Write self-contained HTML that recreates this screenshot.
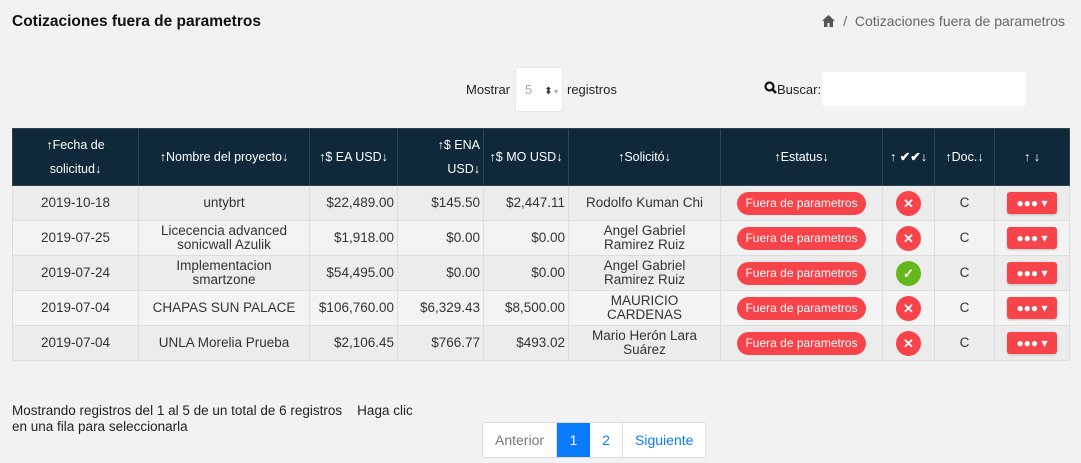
<!DOCTYPE html>
<html><head><meta charset="utf-8"><style>
body{margin:0;background:#f2f2f2;font-family:"Liberation Sans",sans-serif;color:#222;width:1081px;height:463px;overflow:hidden;position:relative}
.a{position:absolute}
h1{position:absolute;left:12px;top:13px;margin:0;font-size:15.5px;font-weight:bold;color:#111}
.bc{right:16px;top:13px;font-size:14px;color:#666}
table{position:absolute;left:12px;top:128px;border-collapse:collapse;table-layout:fixed;width:1057px;font-size:13.5px}
th{background:#10293a;color:#fff;font-weight:normal;height:56px;border:1px solid #2b4352;padding:0 3px;line-height:24px;font-size:12.5px}
td{height:34px;border:1px solid #ddd;text-align:center;color:#333;padding:0 3px;line-height:14px}
td.w{padding:0 14px}
td.n{white-space:nowrap;padding:0 3px}
tr.o td{background:#ececec}tr.e td{background:#f3f3f3}
.r{text-align:right}
.pill{display:inline-block;background:#f7444a;color:#fff;border-radius:12px;padding:0 8px;height:23px;line-height:23px;font-size:12px}
.ci{display:inline-block;width:25px;height:25px;border-radius:50%;background:#f7444a;color:#fff;line-height:25px;font-weight:bold;font-size:13px}
.g{background:#64b81c}
.btn{display:inline-block;background:#f7444a;color:#fff;border-radius:3px;width:50px;height:22px;line-height:22px;font-size:12px;box-shadow:0 1px 2px rgba(0,0,0,.2)}
</style></head><body>
<h1>Cotizaciones fuera de parametros</h1>
<div class="a bc"><svg width="13" height="12" viewBox="0 0 13 12" style="vertical-align:-1px"><path d="M6.5 0L0 6h2v6h3.5V8h2v4H11V6h2z" fill="#555"/></svg> &nbsp;/ &nbsp;Cotizaciones fuera de parametros</div>
<div class="a" style="left:466px;top:82px;font-size:13px">Mostrar</div>
<div class="a" style="left:515px;top:67px;width:46px;height:43px;background:#fff;border:1px solid #e8e8e8;border-radius:2px;font-size:13px;color:#aaa;line-height:43px"><span style="margin-left:9px">5</span><span style="margin-left:12px;color:#333;font-size:10px">⬍</span><span style="font-size:7px">▼</span></div>
<div class="a" style="left:567px;top:82px;font-size:13px">registros</div>
<div class="a" style="left:764px;top:81px"><svg width="13" height="13" viewBox="0 0 13 13"><circle cx="5.5" cy="5.5" r="4" stroke="#111" stroke-width="2.2" fill="none"/><path d="M8.5 8.5L12 12" stroke="#111" stroke-width="2.6"/></svg></div>
<div class="a" style="left:777px;top:82px;font-size:13px">Buscar:</div>
<div class="a" style="left:822px;top:72px;width:204px;height:34px;background:#fff;border-radius:3px"></div>
<table>
<colgroup><col style="width:126px"><col style="width:171px"><col style="width:88px"><col style="width:86px"><col style="width:85px"><col style="width:152px"><col style="width:162px"><col style="width:52px"><col style="width:60px"><col style="width:75px"></colgroup>
<tr><th>↑Fecha de<br>solicitud↓</th><th>↑Nombre del proyecto↓</th><th>↑$ EA USD↓</th><th class="r">↑$ ENA<br>USD↓</th><th>↑$ MO USD↓</th><th>↑Solicitó↓</th><th>↑Estatus↓</th><th>↑ <b>✔✔</b>↓</th><th>↑Doc.↓</th><th>↑ ↓</th></tr>
<tr class="o"><td>2019-10-18</td><td class="w">untybrt</td><td class="r">$22,489.00</td><td class="r">$145.50</td><td class="r">$2,447.11</td><td class="w">Rodolfo Kuman Chi</td><td><span class="pill">Fuera de parametros</span></td><td><span class="ci">✕</span></td><td>C</td><td><span class="btn">●●● ▾</span></td></tr>
<tr class="e"><td>2019-07-25</td><td class="w">Licecencia advanced sonicwall Azulik</td><td class="r">$1,918.00</td><td class="r">$0.00</td><td class="r">$0.00</td><td class="w">Angel Gabriel Ramirez Ruiz</td><td><span class="pill">Fuera de parametros</span></td><td><span class="ci">✕</span></td><td>C</td><td><span class="btn">●●● ▾</span></td></tr>
<tr class="o"><td>2019-07-24</td><td class="w">Implementacion smartzone</td><td class="r">$54,495.00</td><td class="r">$0.00</td><td class="r">$0.00</td><td class="w">Angel Gabriel Ramirez Ruiz</td><td><span class="pill">Fuera de parametros</span></td><td><span class="ci g">✓</span></td><td>C</td><td><span class="btn">●●● ▾</span></td></tr>
<tr class="e"><td>2019-07-04</td><td class="n">CHAPAS SUN PALACE</td><td class="r">$106,760.00</td><td class="r">$6,329.43</td><td class="r">$8,500.00</td><td class="w">MAURICIO CARDENAS</td><td><span class="pill">Fuera de parametros</span></td><td><span class="ci">✕</span></td><td>C</td><td><span class="btn">●●● ▾</span></td></tr>
<tr class="o"><td>2019-07-04</td><td class="w">UNLA Morelia Prueba</td><td class="r">$2,106.45</td><td class="r">$766.77</td><td class="r">$493.02</td><td class="w">Mario Herón Lara Suárez</td><td><span class="pill">Fuera de parametros</span></td><td><span class="ci">✕</span></td><td>C</td><td><span class="btn">●●● ▾</span></td></tr>
</table>
<div class="a" style="left:12px;top:403px;font-size:13.5px;line-height:16px;width:440px">Mostrando registros del 1 al 5 de un total de 6 registros &nbsp;&nbsp;&nbsp;Haga clic<br>en una fila para seleccionarla</div>
<div class="a" style="left:482px;top:422px;height:34px;display:flex;font-size:14px;line-height:34px;border:1px solid #ddd;border-radius:3px;background:#fff">
<span style="padding:0 12px;color:#777;border-right:1px solid #ddd">Anterior</span><span style="width:33px;text-align:center;background:#0a7bff;color:#fff">1</span><span style="width:32px;text-align:center;color:#0a7bff;border-right:1px solid #ddd">2</span><span style="padding:0 12px;color:#0a7bff">Siguiente</span></div>
</body></html>
